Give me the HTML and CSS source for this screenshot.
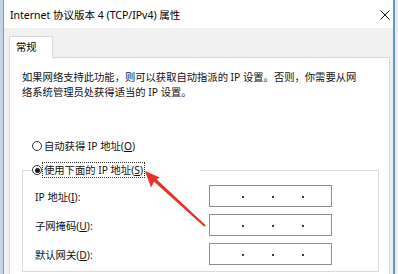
FILE: index.html
```html
<!DOCTYPE html>
<html lang="zh-CN">
<head>
<meta charset="utf-8">
<title>Internet 协议版本 4 (TCP/IPv4) 属性</title>
<link rel="stylesheet" href="styles.css">
</head>
<body>
<div class="screen">
  <div class="edge edge-left"></div>
  <div class="dialog">
    <div class="titlebar">
      <span class="title">Internet 协议版本 4 (TCP/IPv4) 属性</span>
      <svg class="close" width="10" height="10" viewBox="0 0 10 10" aria-label="关闭"><path d="M0.5 0.5L9.5 9.5M9.5 0.5L0.5 9.5" stroke="#1a1a1a" stroke-width="1" fill="none"/></svg>
    </div>
    <div class="body">
      <div class="tabs"><div class="tab">常规</div></div>
      <div class="panel">
        <p class="intro">如果网络支持此功能，则可以获取自动指派的 IP 设置。否则，你需要从网<br>络系统管理员处获得适当的 IP 设置。</p>
        <div class="option option-auto"><span class="radio"></span><span class="opt-label">自动获得 IP 地址(<u>O</u>)</span></div>
        <fieldset class="group">
          <legend class="group-head"><div class="option"><span class="radio checked"></span><span class="opt-label focus">使用下面的 IP 地址(<u>S</u>)</span></div></legend>
          <div class="fields">
            <div class="field"><span class="field-label">IP 地址(<u>I</u>):</span><span class="ipbox"><i></i><i></i><i></i></span></div>
            <div class="field"><span class="field-label">子网掩码(<u>U</u>):</span><span class="ipbox"><i></i><i></i><i></i></span></div>
            <div class="field"><span class="field-label">默认网关(<u>D</u>):</span><span class="ipbox"><i></i><i></i><i></i></span></div>
          </div>
        </fieldset>
      </div>
    </div>
  </div>
  <div class="edge edge-right"></div>
  <svg class="arrow" width="398" height="274" viewBox="0 0 398 274"><polygon points="145,171 160,177.5 156.5,179.2 205.7,225.3 204.3,226.7 154.1,181.8 151,187.5" fill="#e8312b"/></svg>
</div>
</body>
</html>
```
FILE: styles.css
```css
* { box-sizing: border-box; }
html, body { margin: 0; padding: 0; }
body {
  width: 398px;
  height: 274px;
  overflow: hidden;
  background: #fff;
  font-family: "Noto Sans", "Noto Sans CJK SC", sans-serif;
  font-size: 10.3px;
  color: #111;
}
.screen { position: relative; display: flex; height: 274px; overflow: hidden; }
.edge { flex: none; width: 3px; }
.edge-left { background: #c3d4e6; }
.edge-right { background: #e8edf2; }
.dialog {
  flex: 1;
  min-width: 0;
  display: flex;
  flex-direction: column;
  border-left: 1px solid #6d9ccb;
  border-right: 2px solid #5b97cc;
  background: #f0f0f0;
}
.titlebar {
  flex: none;
  height: 28px;
  background: #fff;
  display: flex;
  align-items: center;
  justify-content: space-between;
  padding: 0 3px 0 6px;
}
.title { font-size: 10.5px; color: #000; line-height: 1; padding-top: 2px; }
.close { display: block; margin-top: 1px; }
.body { flex: 1; padding: 8px 3px 0 5px; }
.tabs { display: flex; position: relative; z-index: 1; }
.tab {
  width: 44px;
  height: 22px;
  margin-bottom: -1px;
  background: #fff;
  border: 1px solid #d9d9d9;
  border-bottom: none;
  padding-left: 6px;
  line-height: 20px;
  color: #000;
}
.panel { background: #fff; border: 1px solid #d9d9d9; padding: 12px 10px 10px 12px; }
.intro { margin: 0; line-height: 15px; white-space: nowrap; }
.option { display: flex; align-items: center; gap: 1px; height: 16px; white-space: nowrap; }
.option-auto { margin: 38px 0 0 10px; }
.radio {
  flex: none;
  width: 10px;
  height: 10px;
  border: 1px solid #333;
  border-radius: 50%;
  background: #fff;
  display: flex;
  align-items: center;
  justify-content: center;
}
.radio.checked::after { content: ""; width: 5px; height: 5px; border-radius: 50%; background: #1a1a1a; }
.opt-label { line-height: 14px; padding: 0 1px; }
.focus { outline: 1px dotted #333; }
.group { margin: 8px 0 0; padding: 0 0 6px 9px; border: 1px solid #dcdcdc; min-width: 0; }
.group-head { width: 168px; padding: 0; }
.fields { display: grid; gap: 7px; padding-top: 7px; margin-left: 3px; }
.field { display: grid; grid-template-columns: 174px 123px; align-items: center; height: 22px; }
.ipbox {
  height: 22px;
  border: 1px solid #8f8f8f;
  display: flex;
  align-items: center;
  gap: 28px;
  padding-left: 32px;
  padding-top: 2px;
}
.ipbox i { width: 2px; height: 2px; background: #3a3a3a; }
.arrow { position: absolute; left: 0; top: 0; pointer-events: none; }
```
